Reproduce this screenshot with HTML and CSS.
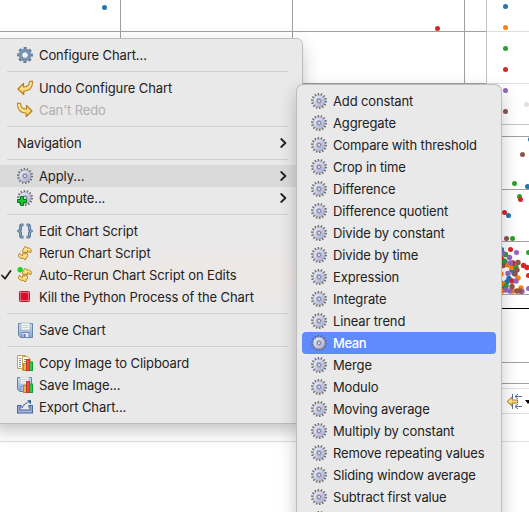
FILE: index.html
```
<!DOCTYPE html>
<html lang="en">
<head>
<meta charset="utf-8">
<title>Chart menu</title>
<link rel="stylesheet" href="styles.css">
</head>
<body>
<svg class="defs" width="0" height="0" aria-hidden="true">
  <defs>
    <linearGradient id="lav" x1="0" y1="0" x2="1" y2="1"><stop offset="0" stop-color="#f0f0f8"/><stop offset=".5" stop-color="#cdcfe6"/><stop offset="1" stop-color="#a3a6cf"/></linearGradient>
    <linearGradient id="gold" x1="0" y1="0" x2="0" y2="1"><stop offset="0" stop-color="#fff5c8"/><stop offset="1" stop-color="#f7cc50"/></linearGradient>
    <linearGradient id="disk" x1="0" y1="0" x2="0" y2="1"><stop offset="0" stop-color="#c8d8e6"/><stop offset="1" stop-color="#8fa9d6"/></linearGradient>
    <symbol id="gear" viewBox="0 0 16 16">
      <circle cx="8" cy="8" r="7" fill="none" stroke="#66666c" stroke-width="2" stroke-dasharray="1.4 1.743"/>
      <circle cx="8" cy="8" r="6" fill="url(#lav)" stroke="#8b8c9c" stroke-width=".7"/>
      <circle cx="8" cy="8" r="2.900" fill="#a9abc6"/>
      <circle cx="8" cy="8" r="1.500" fill="#fafafa" stroke="#6d7086" stroke-width=".8"/>
    </symbol>
    <symbol id="bars" viewBox="0 0 16 16">
      <rect x="6.500" y="8.500" width="3" height="7" fill="#e8b83c" stroke="#b8862b"/>
      <rect x="9.500" y="4.500" width="3" height="11" fill="#f04a42" stroke="#c8322e"/>
      <rect x="12.500" y="7" width="3" height="8.500" fill="#2ccb45" stroke="#159b35"/>
    </symbol>
    <symbol id="floppy" viewBox="0 0 16 16">
      <path d="M1.500 1.500h14v14h-12l-2-2z" fill="url(#disk)" stroke="#6684a8"/>
      <path d="M4 1h9v7H4z" fill="#f2f6f4" stroke="#a8bcc4" stroke-width=".8"/>
      <path d="M5.500 3.500h6M5.500 5.500h6" stroke="#c8d4cc"/>
      <path d="M5 10.500h7v5H5z" fill="#e4ecf8" stroke="#6078a8" stroke-width=".8"/>
      <path d="M6.500 12h2v3h-2z" fill="#6078b0"/>
    </symbol>
    <symbol id="undo" viewBox="0 0 16 16">
      <path d="M1 9L6.500 3.500V7C10 7 12.500 5 12.500 1.500L15.300 1C16 7 13 11 6.800 11.200V14.500Z" fill="url(#gold)" stroke="#b57a18" stroke-width="1.100" stroke-linejoin="round"/>
    </symbol>
    <symbol id="rerun" viewBox="0 0 16 16">
      <path d="M5.500 5.500L8.200 1.200 10 3C12 2.600 13.600 3.300 14.600 5.500L13.500 8 11.600 5.800 10.300 6 11 7.300 6 7.600Z" fill="url(#gold)" stroke="#bd811b" stroke-linejoin="round"/>
      <path d="M10.800 10.800L8 15 6.300 13.300C4.300 13.700 2.300 12.800 1.400 10.800L2.500 8.200 4.500 10.500 5.900 10.200 5.300 9 10.200 8.700Z" fill="url(#gold)" stroke="#bd811b" stroke-linejoin="round"/>
    </symbol>
  </defs>
</svg>
<main class="window">
  <svg class="chart" viewBox="0 0 529 512" width="529" height="512">
    <g class="grid">
      <path d="M120.500 0V60M292.500 0V90M464.500 0V90M0 31.500H486M290 83.500H486"/>
      <path d="M495 136.500H529M495 189.500H529M495 241.500H529M495 294.500H529M495 362.500H529M495 383.500H529"/>
    </g>
    <path class="legend-edge" d="M486.500 0V90M486 124.500H529"/>
    <path class="faint" d="M487 31.500H529M487 83.500H529M495 388.500H529M495 413.500H529M0 441.500H529"/>
    <path d="M495 308.500H529" stroke="#000"/>
    <g class="blue"><circle cx="104.500" cy="7.500" r="2.500"/><circle cx="505.500" cy="6.500" r="2.500"/><circle cx="530.500" cy="139.500" r="2.500"/><circle cx="527.500" cy="186.500" r="2.500"/><circle cx="508.500" cy="215.500" r="2.500"/><circle cx="501.500" cy="249.500" r="2.500"/><circle cx="512" cy="270" r="2.700"/><circle cx="509" cy="278.500" r="2.700"/><circle cx="507" cy="282" r="2.700"/><circle cx="501" cy="283" r="2.700"/><circle cx="505" cy="262" r="2.700"/><circle cx="514" cy="273" r="2.700"/><circle cx="503" cy="287" r="2.700"/></g>
    <g class="orange"><circle cx="505.500" cy="27.500" r="2.500"/><circle cx="512" cy="267.500" r="2.700"/><circle cx="508" cy="265" r="2.700"/><circle cx="518" cy="278" r="2.700"/><circle cx="501" cy="274" r="2.700"/><circle cx="503" cy="284" r="2.700"/><circle cx="502" cy="291" r="2.700"/><circle cx="521" cy="288" r="2.700"/><circle cx="513" cy="291" r="2.700"/></g>
    <g class="green"><circle cx="505.500" cy="48.500" r="2.500"/><circle cx="514.500" cy="183.500" r="2.500"/><circle cx="519.500" cy="196.500" r="2.500"/><circle cx="512.500" cy="238.500" r="2.500"/><circle cx="505.500" cy="254.500" r="2.700"/><circle cx="528.500" cy="252.500" r="2.500"/><circle cx="504" cy="261" r="2.700"/><circle cx="516" cy="267" r="2.700"/><circle cx="506" cy="286" r="2.700"/></g>
    <g class="red"><circle cx="437.500" cy="28.500" r="2.500"/><circle cx="505.500" cy="69.500" r="2.500"/><circle cx="520.500" cy="199.500" r="2.500"/><circle cx="504.500" cy="212.500" r="2.500"/><circle cx="510.500" cy="249.500" r="2.500"/><circle cx="501" cy="258" r="2.700"/><circle cx="513" cy="263" r="2.700"/><circle cx="523.500" cy="265.500" r="2.700"/><circle cx="527" cy="267.500" r="2.700"/><circle cx="528.500" cy="275.500" r="2.500"/><circle cx="512" cy="281" r="2.700"/></g>
    <g class="purple"><circle cx="505.500" cy="90.500" r="2.500"/><circle cx="516.500" cy="252.500" r="2.500"/><circle cx="502.500" cy="253" r="2.700"/><circle cx="509.500" cy="257.500" r="2.700"/><circle cx="510.500" cy="263" r="2.700"/><circle cx="508" cy="273.500" r="2.700"/><circle cx="516" cy="281" r="2.700"/><circle cx="528.500" cy="288.500" r="2.500"/><circle cx="510" cy="291" r="2.700"/><circle cx="522" cy="291.500" r="2.700"/><circle cx="506" cy="290" r="2.700"/></g>
    <g class="brown"><circle cx="505.500" cy="111.500" r="2.500"/><circle cx="522.500" cy="154.500" r="2.500"/><circle cx="506.500" cy="238.500" r="2.500"/><circle cx="518" cy="262.500" r="2.700"/><circle cx="503" cy="265.500" r="2.700"/><circle cx="517" cy="270" r="2.700"/><circle cx="515" cy="274" r="2.700"/><circle cx="512" cy="286.500" r="2.700"/><circle cx="520" cy="291" r="2.700"/><circle cx="517" cy="291" r="2.700"/><circle cx="526.500" cy="104.500" r="2.500" opacity=".2"/></g>
    <path d="M507 401.500L512 397V400H517.500V403H512V406Z" fill="url(#gold)" stroke="#b57a18"/>
    <path d="M512.500 394V399M512.500 404V409M515 396.500H522M515 406.500H522M518 394L515 396.500 518 399M518 404L515 406.500 518 409" fill="none" stroke="#58708e"/>
    <path d="M525 400H531L528 404Z"/>
  </svg>

  <nav class="menu context">
    <div class="item"><span class="check"></span><svg class="icon" viewBox="0 0 16 16"><circle cx="8" cy="8" r="6.800" fill="none" stroke="#5c7896" stroke-width="2.200" stroke-dasharray="3 2.340" stroke-dashoffset="1.500"/><circle cx="8" cy="8" r="4.500" fill="none" stroke="#7893b0" stroke-width="3.800"/><circle cx="8" cy="8" r="2.600" fill="#f1f1ee"/></svg><span class="label">Configure Chart...</span></div>
    <hr>
    <div class="item"><span class="check"></span><svg class="icon"><use href="#undo"/></svg><span class="label">Undo Configure Chart</span></div>
    <div class="item disabled"><span class="check"></span><svg class="icon flip"><use href="#undo"/></svg><span class="label">Can't Redo</span></div>
    <hr>
    <div class="item"><span class="check"></span><span class="label">Navigation</span><svg class="arrow" viewBox="0 0 7 10"><path d="M1.200 1L5.400 5 1.200 9"/></svg></div>
    <hr>
    <div class="item open"><span class="check"></span><svg class="icon"><use href="#gear"/></svg><span class="label">Apply...</span><svg class="arrow" viewBox="0 0 7 10"><path d="M1.200 1L5.400 5 1.200 9"/></svg></div>
    <div class="item"><span class="check"></span><svg class="icon" viewBox="0 0 16 16"><use href="#gear"/><path d="M3.500 6.500h3v3h3v3h-3v3h-3v-3h-3v-3h3z" fill="#18c832" stroke="#08791b"/></svg><span class="label">Compute...</span><svg class="arrow" viewBox="0 0 7 10"><path d="M1.200 1L5.400 5 1.200 9"/></svg></div>
    <hr>
    <div class="item"><span class="check"></span><svg class="icon" viewBox="0 0 16 16"><g fill="none" stroke-linejoin="round"><path d="M6.500 1.800H5Q3.500 1.800 3.500 3.500V6Q3.500 7.500 1.500 8 3.500 8.500 3.500 10V12.500Q3.500 14.200 5 14.200H6.500M9.500 1.800H11Q12.500 1.800 12.500 3.500V6Q12.500 7.500 14.500 8 12.500 8.500 12.500 10V12.500Q12.500 14.200 11 14.200H9.500" stroke="#51708f" stroke-width="2.800"/><path d="M6.500 1.800H5Q3.500 1.800 3.500 3.500V6Q3.500 7.500 1.500 8 3.500 8.500 3.500 10V12.500Q3.500 14.200 5 14.200H6.500M9.500 1.800H11Q12.500 1.800 12.500 3.500V6Q12.500 7.500 14.500 8 12.500 8.500 12.500 10V12.500Q12.500 14.200 11 14.200H9.500" stroke="#8eaccb"/></g></svg><span class="label">Edit Chart Script</span></div>
    <div class="item"><span class="check"></span><svg class="icon"><use href="#rerun"/></svg><span class="label">Rerun Chart Script</span></div>
    <div class="item"><span class="check"><svg viewBox="0 0 11 10" width="11" height="10"><path d="M1 5.500L4 8.700 9.500 1"/></svg></span><svg class="icon" viewBox="0 0 16 16"><use href="#rerun"/><circle cx="3.200" cy="2.800" r="2.700" fill="#14d52c"/></svg><span class="label">Auto-Rerun Chart Script on Edits</span></div>
    <div class="item"><span class="check"></span><svg class="icon" viewBox="0 0 16 16"><rect x="2.500" y="2.500" width="10" height="10" rx=".8" fill="#f7c4cc" stroke="#a81c34"/><rect x="3.500" y="3.500" width="8" height="8" fill="#d80d28" stroke="#ee6a7e" stroke-width=".6"/></svg><span class="label">Kill the Python Process of the Chart</span></div>
    <hr>
    <div class="item"><span class="check"></span><svg class="icon"><use href="#floppy"/></svg><span class="label">Save Chart</span></div>
    <hr>
    <div class="item"><span class="check"></span><svg class="icon" viewBox="0 0 16 16"><path d="M.5.500h8v13h-8z" fill="#fbf8e8" stroke="#bba45b"/><path d="M5.500 1.500h5l3 3v11h-8z" fill="#fffdf0" stroke="#c6a94c"/><path d="M2 3.500h2M2 5.500h2M2 7.500h2M2 9.500h2M2 11.500h2M7 4.500h3M7 6.500h3" stroke="#8295bd"/><use href="#bars"/></svg><span class="label">Copy Image to Clipboard</span></div>
    <div class="item"><span class="check"></span><svg class="icon" viewBox="0 0 16 16"><g transform="translate(-1 -1)"><use href="#floppy" width="16" height="16"/></g><use href="#bars"/></svg><span class="label">Save Image...</span></div>
    <div class="item"><span class="check"></span><svg class="icon" viewBox="0 0 16 16"><path d="M.6 6.500H4V8H3V11H13V8H12V6.500H15.400V14H.6Z" fill="#a4b4de" stroke="#4a62a0" stroke-width="1.100"/><path d="M5 9Q7 4.500 11.500 3.300" fill="none" stroke="#3f6b94" stroke-width="1.100" stroke-dasharray="2 .6"/><path d="M10 1.200H14V5.200Z" fill="#285a85"/></svg><span class="label">Export Chart...</span></div>
  </nav>

  <nav class="menu sub">
    <div class="item"><svg class="icon"><use href="#gear"/></svg><span class="label">Add constant</span></div>
    <div class="item"><svg class="icon"><use href="#gear"/></svg><span class="label">Aggregate</span></div>
    <div class="item"><svg class="icon"><use href="#gear"/></svg><span class="label">Compare with threshold</span></div>
    <div class="item"><svg class="icon"><use href="#gear"/></svg><span class="label">Crop in time</span></div>
    <div class="item"><svg class="icon"><use href="#gear"/></svg><span class="label">Difference</span></div>
    <div class="item"><svg class="icon"><use href="#gear"/></svg><span class="label">Difference quotient</span></div>
    <div class="item"><svg class="icon"><use href="#gear"/></svg><span class="label">Divide by constant</span></div>
    <div class="item"><svg class="icon"><use href="#gear"/></svg><span class="label">Divide by time</span></div>
    <div class="item"><svg class="icon"><use href="#gear"/></svg><span class="label">Expression</span></div>
    <div class="item"><svg class="icon"><use href="#gear"/></svg><span class="label">Integrate</span></div>
    <div class="item"><svg class="icon"><use href="#gear"/></svg><span class="label">Linear trend</span></div>
    <div class="item selected"><svg class="icon"><use href="#gear"/></svg><span class="label">Mean</span></div>
    <div class="item"><svg class="icon"><use href="#gear"/></svg><span class="label">Merge</span></div>
    <div class="item"><svg class="icon"><use href="#gear"/></svg><span class="label">Modulo</span></div>
    <div class="item"><svg class="icon"><use href="#gear"/></svg><span class="label">Moving average</span></div>
    <div class="item"><svg class="icon"><use href="#gear"/></svg><span class="label">Multiply by constant</span></div>
    <div class="item"><svg class="icon"><use href="#gear"/></svg><span class="label">Remove repeating values</span></div>
    <div class="item"><svg class="icon"><use href="#gear"/></svg><span class="label">Sliding window average</span></div>
    <div class="item"><svg class="icon"><use href="#gear"/></svg><span class="label">Subtract first value</span></div>
    <div class="item"><svg class="icon"><use href="#gear"/></svg></div>
  </nav>
</main>
</body>
</html>
```
FILE: styles.css
```
* { box-sizing: border-box; }
body { margin: 0; background: #fff; overflow: hidden; }
.defs { position: absolute; }
.window {
  position: relative;
  width: 529px;
  height: 512px;
  overflow: hidden;
  font: 13px/22px Inter, "Liberation Sans", sans-serif;
  letter-spacing: -0.1px;
  color: #222;
}
.chart { display: block; }
.grid { stroke: #a0a0a0; fill: none; }
.legend-edge { stroke: #c4c4c4; fill: none; }
.faint { stroke: #dedede; fill: none; }
.blue { fill: #1f77b4; }
.orange { fill: #ff7f0e; }
.green { fill: #2ca02c; }
.red { fill: #d62728; }
.purple { fill: #9467bd; }
.brown { fill: #8c564b; }

.menu {
  position: absolute;
  background: #e9e9e9;
  padding: 5px 0;
  box-shadow: 0 0 0 1px #bdbdbd, 0 7px 18px rgba(0, 0, 0, .25);
}
.context {
  left: -8px;
  top: 39px;
  width: 310px;
  height: 384px;
  padding-left: 8px;
  border-radius: 6px;
  background: linear-gradient(#e9e9e9 52%, #ece8e6 61%, #e9e9e9 72%);
}
.sub {
  left: 297px;
  top: 85px;
  width: 204px;
  height: 440px;
  padding: 5px;
  border-radius: 6px;
  letter-spacing: -0.14px;
}
.item {
  display: flex;
  align-items: center;
  height: 22px;
  white-space: nowrap;
}
.context .item { padding-right: 15px; }
.sub .item { padding-left: 9px; border-radius: 4px; }
.check { flex: 0 0 17px; display: flex; padding-left: 1px; }
.check path { fill: none; stroke: #222; stroke-width: 1.8; stroke-linecap: round; stroke-linejoin: round; }
.icon { width: 16px; height: 16px; flex: none; margin-right: 6px; }
.flip { transform: scaleX(-1); }
.arrow { width: 7px; height: 10px; margin-left: auto; }
.arrow path { fill: none; stroke: #222; stroke-width: 1.8; stroke-linecap: round; stroke-linejoin: round; }
.disabled { color: #b0b0b0; }
.open { background: #dadada; }
.selected { background: #5f8bfe; color: #fff; font-weight: 500; letter-spacing: -0.4px; }
hr {
  height: 1px;
  margin: 5px 14px 5px 7px;
  border: 0;
  background: #d0d0d0;
}
```
